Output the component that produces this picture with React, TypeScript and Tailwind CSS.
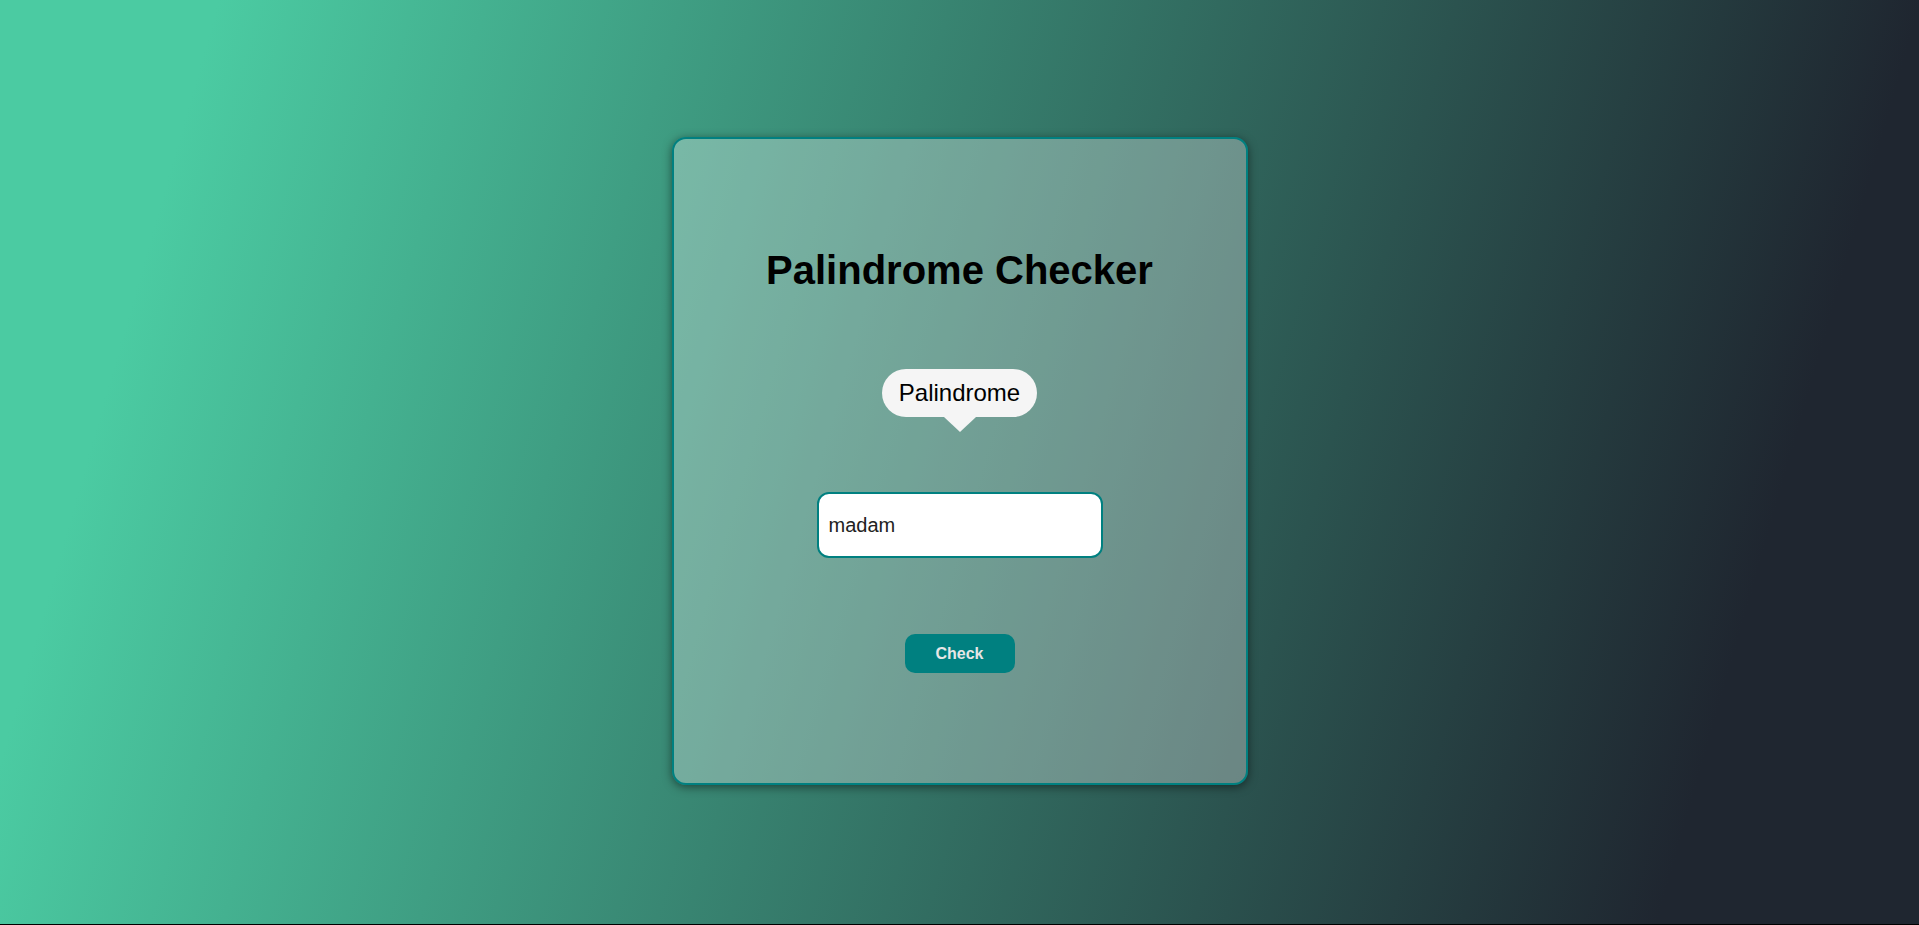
import React from "react";

export default function App() {
  return (
    <div className="w-full h-[925px] bg-black" style={{ fontFamily: '"Liberation Sans", Arial, sans-serif' }}>
      <div className="w-full h-[924px] flex items-center justify-center bg-[linear-gradient(106deg,#4bcba2_10%,#1f2630_88%)]">
        <div className="mb-[2px] w-[576px] h-[648px] rounded-[14px] border-2 border-[#008080] bg-white/30 shadow-[0_2px_10px_rgba(0,0,0,0.5)] flex flex-col items-center">
          <h1 className="mt-[108px] text-[40px] leading-[46px] font-bold text-black">Palindrome Checker</h1>
          <div className="relative mt-[76px] h-[48px] px-[17px] rounded-full bg-[#f5f5f5] flex items-center text-[24px] text-black">
            Palindrome
            <div className="absolute left-1/2 -translate-x-1/2 top-full w-0 h-0 border-l-[16px] border-r-[16px] border-t-[15px] border-l-transparent border-r-transparent border-t-[#f5f5f5]" />
          </div>
          <input
            className="mt-[75px] w-[286px] h-[66px] rounded-[12px] border-2 border-[#008080] bg-white pl-[10px] text-[20px] text-[#222] outline-none"
            defaultValue="madam"
            style={{ fontFamily: '"Liberation Sans", Arial, sans-serif' }}
          />
          <button
            className="mt-[76px] w-[110px] h-[39px] rounded-[10px] bg-[#008080] text-[#e6e6e6] text-[16px] font-bold"
            style={{ fontFamily: '"Liberation Sans", Arial, sans-serif' }}
          >
            Check
          </button>
        </div>
      </div>
    </div>
  );
}
